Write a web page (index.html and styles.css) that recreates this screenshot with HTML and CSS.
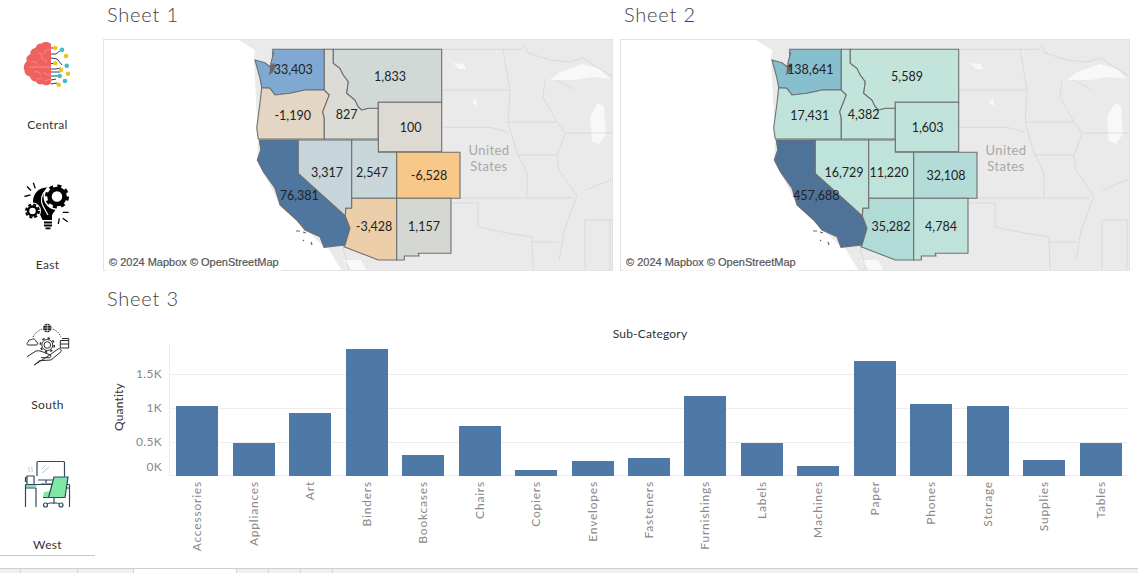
FILE: index.html
```html
<!DOCTYPE html>
<html lang="en">
<head>
  <meta charset="UTF-8" />
  <meta name="viewport" content="width=device-width, initial-scale=1.0"/>
  <title>Regional Dashboard</title>
  <link rel="stylesheet" href="styles.css">
</head>
<body>
  <div class="dash">
    <aside class="sidebar">
      <div class="region">
        <svg class="region-icon" viewBox="21 40 52 52">
          <g class="circuit">
            <path d="M50 48h4M50 54l5 0 5-4M50 58l6 1 5 6M50 63.500h4M50 69l5 0 5-1M50 72h9M50 76h8M50 80l5-1M50 84l6-1 1 1"/>
          </g>
          <circle class="dot-y" cx="54.300" cy="48" r="2.300"/>
          <circle class="dot-t" cx="61" cy="49.700" r="2.300"/>
          <circle class="dot-y" cx="65" cy="56" r="2.300"/>
          <circle class="dot-y" cx="54.300" cy="63.300" r="2.300"/>
          <circle class="dot-t" cx="65.700" cy="65.700" r="2.300"/>
          <circle class="dot-y" cx="60" cy="70" r="2.300"/>
          <circle class="dot-y" cx="67" cy="73.700" r="2.300"/>
          <circle class="dot-t" cx="58.700" cy="76" r="2.300"/>
          <circle class="dot-t" cx="64" cy="81" r="2.300"/>
          <circle class="dot-y" cx="57.700" cy="84.700" r="2.300"/>
          <path class="brain" d="M50 44c-3-2.500-7-2.500-9-.5-3-.5-6 1.500-6.500 4.500-3.500.5-5.500 3-5 6-3.500 1.500-5 4.500-3.500 7-3 2.500-4 6.500-2.500 9.500 0 3.500 2.500 5.500 5.500 6 .5 3 3 5 6 5 1 2.500 4 3.500 6.500 2.500 2.500 2 6 1.500 8.500-.5z"/>
          <path class="brain-fold" d="M50 50c-4-1-7 1-7 4M37 53c2 0 4 1 4 4s4 3 5 5M30 62c4-1 6 1 7 3M29 67h21M33 72c3-1 6 0 7 3M42 72c3 2 5 4 8 3M36 79c2 0 4-1 5 0M44 81c2-1 4-2 6-1"/>
        </svg>
        <div class="region-name">Central</div>
      </div>
      <div class="region">
        <svg class="region-icon" viewBox="21 180 52 52">
          <path class="ink" d="M46 187.500c-8 0-14 6-14 14 0 6 5 9 7.500 14l2 4.500h9.500v-5l4-6 3-9-6-13z"/>
          <path class="bulb-cut" d="M45 190c-4 4-6 10-3 16l5 9"/>
          <circle class="gear-halo" cx="56" cy="196.500" r="13.500"/>
          <circle class="gear-ring" cx="56" cy="196.500" r="7.500"/>
          <circle class="gear-teeth" cx="56" cy="196.500" r="10.500"/>
          <circle class="gear-halo-s" cx="31.500" cy="211" r="8.500"/>
          <circle class="gear-ring-s" cx="31.500" cy="211" r="4.500"/>
          <circle class="gear-teeth-s" cx="31.500" cy="211" r="6.500"/>
          <path class="ink" d="M43 221.500h8v2h-8zM43 224.500h8v2h-8zM44.500 227.500h5v1.700h-5z"/>
          <path class="rays" d="M23.500 196.500l6-1.700M26 186.500l4 4M32.300 182.700l2 5.700M61.700 212.300h6M61.700 218.300l5 3.400M58.300 218.300l-1 5.700"/>
        </svg>
        <div class="region-name">East</div>
      </div>
      <div class="region">
        <svg class="region-icon" viewBox="21 320 52 52">
          <circle class="globe" cx="46.300" cy="328" r="4.300"/>
          <path class="globe-lines" d="M42 328h8.600M46.300 323.700v8.600M43 325.500h6.600M43 330.500h6.600"/>
          <path class="dashes" d="M32 337c2-4 5-6 9-8M52 329c4 2 6 4 8 8"/>
          <path class="outline" d="M26.500 345h9c1.500 0 2-3-.5-3.500-.3-2.500-3.500-3.500-5-1.500-2-.7-3 .7-2.700 2-1.500.5-1.500 2.300-.8 3zM59.300 340.500h8.400v7.500h-8.400zM61 338.500h6.700v2M59.300 344h8.400"/>
          <circle class="outline" cx="46.300" cy="345" r="3.300"/>
          <circle class="gear-line" cx="46.300" cy="345" r="5.500"/>
          <circle class="gear-line-t" cx="46.300" cy="345" r="7"/>
          <path class="outline hand" d="M26 356.700l9-5.700c3-1 7 1 10 2.300l4.300 1.700c1 1 .5 2.700-1 2.700H40M48 355.500l9-6.500c2-1 4 1 3 2.700l-10 8.300-11.700.7-5 4.300z"/>
        </svg>
        <div class="region-name">South</div>
      </div>
      <div class="region">
        <svg class="region-icon" viewBox="21 460 52 52">
          <path class="steam" d="M28 467c-1 2 1 3 0 5M31 467c-1 2 1 3 0 5M41 469l4-4M41 473l7-6"/>
          <path class="desk-line" d="M36 476v-13.500c0-.5.500-1 1-1h25.500c.500 0 1 .500 1 1v14M37 480h15M45 480v3M40 484h12"/>
          <path class="desk-line" d="M26 476h7v8.500h-7zM26 477.500h-1.500v4h1.500"/>
          <path class="desk-top" d="M24.500 484.500h11v3h-11z"/>
          <path class="desk-line" d="M24.500 484.500h44M24.500 488h10M62 488h6.500M24.500 484.500v22.500M35 488v19M68.500 484.500v22.500"/>
          <path class="chair" d="M53 477h14l-3 20.500H47.500zM43 492l7-1-1 6h-7z"/>
          <path class="desk-line" d="M53 477h14l-3 20.500H47.500zM42 497.500h22M53 498v6M45 505c1-3 14-3 15 0"/>
          <circle class="wheel" cx="44.500" cy="505" r="2"/>
          <circle class="wheel" cx="60" cy="505" r="2"/>
        </svg>
        <div class="region-name">West</div>
      </div>
    </aside>

    <main class="main">
      <div class="map-row">
        <section class="sheet">
          <h2 class="sheet-title">Sheet 1</h2>
          <div class="map map-profit">
            <svg class="map-svg" viewBox="103 39 510 233">
              <defs>
                <g id="basemap">
                  <path class="land" d="M237 39l18 11-1 10 4 79-1 21 23 45 16 15 28 27 4 1 14 23h271V39z"/>
                  <path class="water" d="M550 80l10-8 23-8 17 5 10 10-17-2-20 3zM590 117l8-14 6 3 2 28-7 10-7-3zM453 63l11 1 2 5-7 0zM472 103l4-5 1 8zM343 260l18 0 6 11-14 0z"/>
                  <path class="state-line" d="M441.700 49.300h80l3.300-4.300 3 8 22 7 20 2 13-4 30 19M441.700 90H510M441.700 127.300H490l18 4.700M503 50l7 40-2 32 9 31 10 20v25M460 198h113M452 203h26v24l29 6 25 4 1 34M508 122h49M545 80l-2 17 14 25 8 11-8 23 2 14 18 26-13 35-5 30M574 89l-18-9M565 133h48M517 155h40M532 242h27M585 220h28M585 190l26-10M585 220v51M610 220v51M343 247l6 24"/>
                  <path class="isle" d="M296 231l4 0M303 232l3 1M303 240l1 1M311 242l1 3"/>
                </g>
                <path id="st-wa" d="M272.700 49.300h51.600V90H305l-15 3.300-15 1.700-5-6.700-8.300-.6-1.700-9.400L255 60l10 2.700 5 4 3-11.700z"/>
                <path id="st-or" d="M261.700 87.700l8.300.6 5 6.700 15-1.700L305 90h19.300l5 5-6.600 16.700 1.600 6.300v21h-66l-1.600-11 3.300-25z"/>
                <path id="st-id" d="M324.300 49.300h9v14l6.700 5 3.300 6.700 5 6.700-1.600 11.600 8.300 6.700 3.300 6.700 3.400 3.300 6.600-1.700h10V139h-54v-21l-1.600-6.300 6.600-16.700-5-5z"/>
                <path id="st-mt" d="M333.300 49.300h108.400v53H378.300v6h-10l-6.600 1.700-3.400-3.300-3.300-6.700-8.300-6.700 1.600-11.600-5-6.700-3.300-6.700-6.700-5z"/>
                <path id="st-wy" d="M378.300 102.300h63.400v49.400h-63.400z"/>
                <path id="st-ca" d="M259.300 140h39v33.300l47 42.700 4.700 12.300-5 16.700-21 2.300-4-10.600-15-6.700-8.300-10-16.700-15-5-16.700-11.700-16.600-6-11.700 3.400-10z"/>
                <path id="st-nv" d="M298.300 140h53.400v68.300H346l-.7 7.700-47-42.700z"/>
                <path id="st-ut" d="M351.700 140h26.600v12.300h18.400v46h-45z"/>
                <path id="st-co" d="M396.700 152.300H460v46h-63.300z"/>
                <path id="st-az" d="M351.700 198.300h45V260h-18.400L344 246.700l1-1.700 5-16.700-4.700-12.300.7-7.700h5.700z"/>
                <path id="st-nm" d="M396.700 198.300H451v55h-32.700l.7 2.700h-14.700v4h-7.600z"/>
              </defs>
              <use href="#basemap"/>
              <text class="place" x="489" y="155">United</text>
              <text class="place" x="489" y="171">States</text>
              <use class="state wa" href="#st-wa"/><use class="state or" href="#st-or"/><use class="state id" href="#st-id"/><use class="state mt" href="#st-mt"/><use class="state wy" href="#st-wy"/><use class="state ca" href="#st-ca"/><use class="state nv" href="#st-nv"/><use class="state ut" href="#st-ut"/><use class="state co" href="#st-co"/><use class="state az" href="#st-az"/><use class="state nm" href="#st-nm"/>
              <path id="puget" class="sound" d="M270 66l4-3 1 5-2 4-4 3 1-4zM272 52l2 1-1 3z"/>
              <text class="val" x="293.300" y="74">33,403</text>
              <text class="val" x="390" y="81">1,833</text>
              <text class="val" x="292.700" y="120">-1,190</text>
              <text class="val" x="346.700" y="119">827</text>
              <text class="val" x="410.700" y="132">100</text>
              <text class="val" x="327" y="177">3,317</text>
              <text class="val" x="372" y="177">2,547</text>
              <text class="val" x="429" y="180">-6,528</text>
              <text class="val" x="299.300" y="200">76,381</text>
              <text class="val" x="374" y="231">-3,428</text>
              <text class="val" x="424" y="231">1,157</text>
            </svg>
            <div class="credit">© 2024 Mapbox © OpenStreetMap</div>
          </div>
        </section>
        <section class="sheet">
          <h2 class="sheet-title">Sheet 2</h2>
          <div class="map map-sales">
            <svg class="map-svg" viewBox="103 39 510 233">
              <use href="#basemap"/>
              <text class="place" x="489" y="155">United</text>
              <text class="place" x="489" y="171">States</text>
              <use class="state wa" href="#st-wa"/><use class="state or" href="#st-or"/><use class="state id" href="#st-id"/><use class="state mt" href="#st-mt"/><use class="state wy" href="#st-wy"/><use class="state ca" href="#st-ca"/><use class="state nv" href="#st-nv"/><use class="state ut" href="#st-ut"/><use class="state co" href="#st-co"/><use class="state az" href="#st-az"/><use class="state nm" href="#st-nm"/>
              <use href="#puget"/>
              <text class="val" x="293.300" y="74">138,641</text>
              <text class="val" x="390" y="81">5,589</text>
              <text class="val" x="292.700" y="120">17,431</text>
              <text class="val" x="346.700" y="119">4,382</text>
              <text class="val" x="410.700" y="132">1,603</text>
              <text class="val" x="327" y="177">16,729</text>
              <text class="val" x="372" y="177">11,220</text>
              <text class="val" x="429" y="180">32,108</text>
              <text class="val" x="299.300" y="200">457,688</text>
              <text class="val" x="374" y="231">35,282</text>
              <text class="val" x="424" y="231">4,784</text>
            </svg>
            <div class="credit">© 2024 Mapbox © OpenStreetMap</div>
          </div>
        </section>
      </div>

      <section class="sheet sheet-chart">
        <h2 class="sheet-title">Sheet 3</h2>
        <div class="chart-head">Sub-Category</div>
        <div class="chart-body">
          <div class="y-axis">
            <div class="y-title">Quantity</div>
            <span class="y-tick" style="top:23px">1.5K</span>
            <span class="y-tick" style="top:57px">1K</span>
            <span class="y-tick" style="top:91px">0.5K</span>
            <span class="y-tick" style="top:116px">0K</span>
          </div>
          <div class="plot">
            <div class="grid-line" style="top:31px"></div>
            <div class="grid-line" style="top:65px"></div>
            <div class="grid-line" style="top:99px"></div>
            <div class="col"><div class="bar" style="height:70px"></div></div>
            <div class="col"><div class="bar" style="height:33px"></div></div>
            <div class="col"><div class="bar" style="height:63px"></div></div>
            <div class="col"><div class="bar" style="height:127px"></div></div>
            <div class="col"><div class="bar" style="height:21px"></div></div>
            <div class="col"><div class="bar" style="height:50px"></div></div>
            <div class="col"><div class="bar" style="height:6px"></div></div>
            <div class="col"><div class="bar" style="height:15px"></div></div>
            <div class="col"><div class="bar" style="height:18px"></div></div>
            <div class="col"><div class="bar" style="height:80px"></div></div>
            <div class="col"><div class="bar" style="height:33px"></div></div>
            <div class="col"><div class="bar" style="height:10px"></div></div>
            <div class="col"><div class="bar" style="height:115px"></div></div>
            <div class="col"><div class="bar" style="height:72px"></div></div>
            <div class="col"><div class="bar" style="height:70px"></div></div>
            <div class="col"><div class="bar" style="height:16px"></div></div>
            <div class="col"><div class="bar" style="height:33px"></div></div>
          </div>
        </div>
        <div class="x-labels">
          <div class="x-cell"><span>Accessories</span></div>
          <div class="x-cell"><span>Appliances</span></div>
          <div class="x-cell"><span>Art</span></div>
          <div class="x-cell"><span>Binders</span></div>
          <div class="x-cell"><span>Bookcases</span></div>
          <div class="x-cell"><span>Chairs</span></div>
          <div class="x-cell"><span>Copiers</span></div>
          <div class="x-cell"><span>Envelopes</span></div>
          <div class="x-cell"><span>Fasteners</span></div>
          <div class="x-cell"><span>Furnishings</span></div>
          <div class="x-cell"><span>Labels</span></div>
          <div class="x-cell"><span>Machines</span></div>
          <div class="x-cell"><span>Paper</span></div>
          <div class="x-cell"><span>Phones</span></div>
          <div class="x-cell"><span>Storage</span></div>
          <div class="x-cell"><span>Supplies</span></div>
          <div class="x-cell"><span>Tables</span></div>
        </div>
      </section>
    </main>
  </div>

  <div class="tabs">
    <div class="tab tab-a"></div>
    <div class="tab tab-b"></div>
    <div class="tab tab-c"></div>
    <div class="tab tab-active"></div>
    <div class="tab tab-d"></div>
    <div class="tab tab-d"></div>
    <div class="tab tab-d"></div>
  </div>
</body>
</html>
```

FILE: styles.css
```css
body {
  margin: 0;
  height: 573px;
  overflow: hidden;
  display: flex;
  flex-direction: column;
  background: #fff;
  color: #333;
  font-family: Lato, "Open Sans", sans-serif;
}
.dash {
  flex: 1;
  display: flex;
  min-height: 0;
}

/* left column */
.sidebar {
  width: 95px;
  height: 553px;
  padding-bottom: 2px;
  border-bottom: 1px solid #c8c8c8;
  display: flex;
  flex-direction: column;
  gap: 7px;
  flex-shrink: 0;
}
.region {
  height: 133px;
  padding-top: 40px;
  box-sizing: border-box;
  display: flex;
  flex-direction: column;
  align-items: center;
}
.region-icon {
  width: 52px;
  height: 52px;
}
.region-name {
  margin-top: 25px;
  font-size: 12px;
  line-height: 15px;
  letter-spacing: 0.3px;
  color: #333;
}
.circuit path { fill: none; stroke: #23425e; stroke-width: 1; }
.dot-y { fill: #f5c11e; }
.dot-t { fill: #3fbdc2; }
.brain { fill: #f0625f; }
.brain-fold { fill: none; stroke: #f78d87; stroke-width: 1; }
.ink { fill: #000; }
.bulb-cut { fill: none; stroke: #fff; stroke-width: 1.200; }
.gear-halo { fill: #fff; }
.gear-halo-s { fill: #fff; }
.gear-ring { fill: #fff; stroke: #000; stroke-width: 4.500; }
.gear-teeth { fill: none; stroke: #000; stroke-width: 3; stroke-dasharray: 4 4.250; }
.gear-ring-s { fill: #fff; stroke: #000; stroke-width: 2.500; }
.gear-teeth-s { fill: none; stroke: #000; stroke-width: 2; stroke-dasharray: 3 2.100; }
.rays { fill: none; stroke: #000; stroke-width: 1.300; }
.globe { fill: #222; }
.globe-lines { fill: none; stroke: #fff; stroke-width: 0.600; }
.dashes { fill: none; stroke: #333; stroke-width: 0.900; stroke-dasharray: 1.500 1.200; }
.outline { fill: none; stroke: #2b2b2b; stroke-width: 1; }
.hand { fill: #fff; }
.gear-line { fill: none; stroke: #2b2b2b; stroke-width: 1; }
.gear-line-t { fill: none; stroke: #2b2b2b; stroke-width: 1.500; stroke-dasharray: 2.500 3; }
.steam { fill: none; stroke: #b9c4c8; stroke-width: 1; }
.desk-line { fill: none; stroke: #31495a; stroke-width: 1.200; }
.desk-top { fill: #8fdcb0; }
.chair { fill: #7fe8a5; }
.wheel { fill: #fff; stroke: #31495a; stroke-width: 1.200; }

/* sheets */
.main {
  flex: 1;
  min-width: 0;
  margin-left: 8px;
}
.map-row {
  display: flex;
  gap: 7px;
}
.sheet {
  width: 510px;
}
.sheet-title {
  margin: 0 0 0 4px;
  padding-bottom: 10px;
  font-size: 20px;
  font-weight: 300;
  line-height: 29px;
  letter-spacing: 0.8px;
  color: #444;
}

/* maps */
.map {
  position: relative;
  height: 232px;
  box-sizing: border-box;
  overflow: hidden;
  outline: 1px solid #e2e2e2;
  outline-offset: -1px;
}
.map-svg {
  display: block;
  width: 510px;
  height: 233px;
}
.land { fill: #eaeaea; }
.water { fill: #f8f8f8; }
.state-line { fill: none; stroke: #d2d2d2; stroke-width: 0.700; }
.isle { fill: none; stroke: #666; stroke-width: 1.200; }
.sound { fill: #666; stroke: #777; stroke-width: 0.500; }
.state { stroke: #6f6f6f; stroke-width: 1.100; }
.place {
  font-size: 13px;
  letter-spacing: 0.4px;
  fill: #a8a8a8;
  text-anchor: middle;
}
.val {
  font-size: 12.500px;
  fill: #222;
  text-anchor: middle;
}
.map-profit .wa { fill: #7fa9d3; }
.map-profit .or { fill: #e3d6c5; }
.map-profit .id { fill: #dcdcd6; }
.map-profit .mt { fill: #d1d9d7; }
.map-profit .wy { fill: #dcdad3; }
.map-profit .ca { fill: #4f769f; }
.map-profit .nv { fill: #c6d5da; }
.map-profit .ut { fill: #c9d6da; }
.map-profit .co { fill: #f7c888; }
.map-profit .az { fill: #eccfa8; }
.map-profit .nm { fill: #d5d7d3; }
.map-sales .wa { fill: #88bfcf; }
.map-sales .or { fill: #bfe3da; }
.map-sales .id { fill: #c2e4db; }
.map-sales .mt { fill: #c3e4db; }
.map-sales .wy { fill: #bfe3da; }
.map-sales .ca { fill: #4f7299; }
.map-sales .nv { fill: #bee3da; }
.map-sales .ut { fill: #bee3da; }
.map-sales .co { fill: #b3dcd8; }
.map-sales .az { fill: #b1dbd7; }
.map-sales .nm { fill: #bfe3da; }
.credit {
  position: absolute;
  left: 3px;
  bottom: 0;
  padding: 0 3px;
  height: 16px;
  line-height: 15px;
  background: rgba(255, 255, 255, 0.7);
  font-family: "Liberation Sans", Arial, sans-serif;
  font-size: 11px;
  -webkit-text-stroke: 0.2px #555;
  color: #555;
  white-space: nowrap;
}

/* bar chart */
.sheet-chart {
  width: auto;
  margin-top: 13px;
}
.sheet-chart .sheet-title {
  padding-bottom: 0;
}
.chart-head {
  margin-top: 14px;
  margin-left: 66px;
  width: 962px;
  text-align: center;
  font-size: 12px;
  line-height: 14px;
  letter-spacing: 0.2px;
  color: #333;
}
.chart-body {
  display: flex;
  margin-top: 2px;
  height: 133px;
}
.y-axis {
  position: relative;
  width: 66px;
  flex-shrink: 0;
}
.y-title {
  position: absolute;
  left: 9px;
  top: 40px;
  writing-mode: vertical-rl;
  transform: rotate(180deg);
  font-size: 12px;
  line-height: 14px;
  letter-spacing: 0.2px;
  color: #333;
}
.y-tick {
  position: absolute;
  right: 7px;
  font-size: 12px;
  line-height: 16px;
  letter-spacing: 0.3px;
  color: #888;
}
.plot {
  position: relative;
  width: 960px;
  display: flex;
  box-shadow: inset 1px 0 #eee, inset 0 -1px #eee;
}
.grid-line {
  position: absolute;
  left: 0;
  right: 0;
  height: 1px;
  background: #eee;
}
.col {
  position: relative;
  flex: 1;
  display: flex;
  align-items: flex-end;
  justify-content: center;
}
.bar {
  width: 42px;
  background: #4e78a6;
}
.x-labels {
  display: flex;
  margin-left: 66px;
  width: 960px;
}
.x-cell {
  flex: 1;
  display: flex;
  justify-content: center;
  align-items: flex-start;
  padding-top: 5px;
}
.x-cell span {
  writing-mode: vertical-rl;
  transform: rotate(180deg);
  font-size: 12px;
  line-height: 14px;
  letter-spacing: 0.8px;
  color: #888;
}

/* workbook tabs, cut off by the window */
.tabs {
  height: 4px;
  flex-shrink: 0;
  display: flex;
  background: #f0f0f0;
  border-top: 1px solid #cfcfcf;
}
.tab {
  box-sizing: border-box;
  border-right: 1px solid #d4d4d4;
}
.tab-a { width: 21px; }
.tab-b { width: 57px; }
.tab-c { width: 56px; }
.tab-active { width: 103px; background: #fff; }
.tab-d { width: 32px; }
```
